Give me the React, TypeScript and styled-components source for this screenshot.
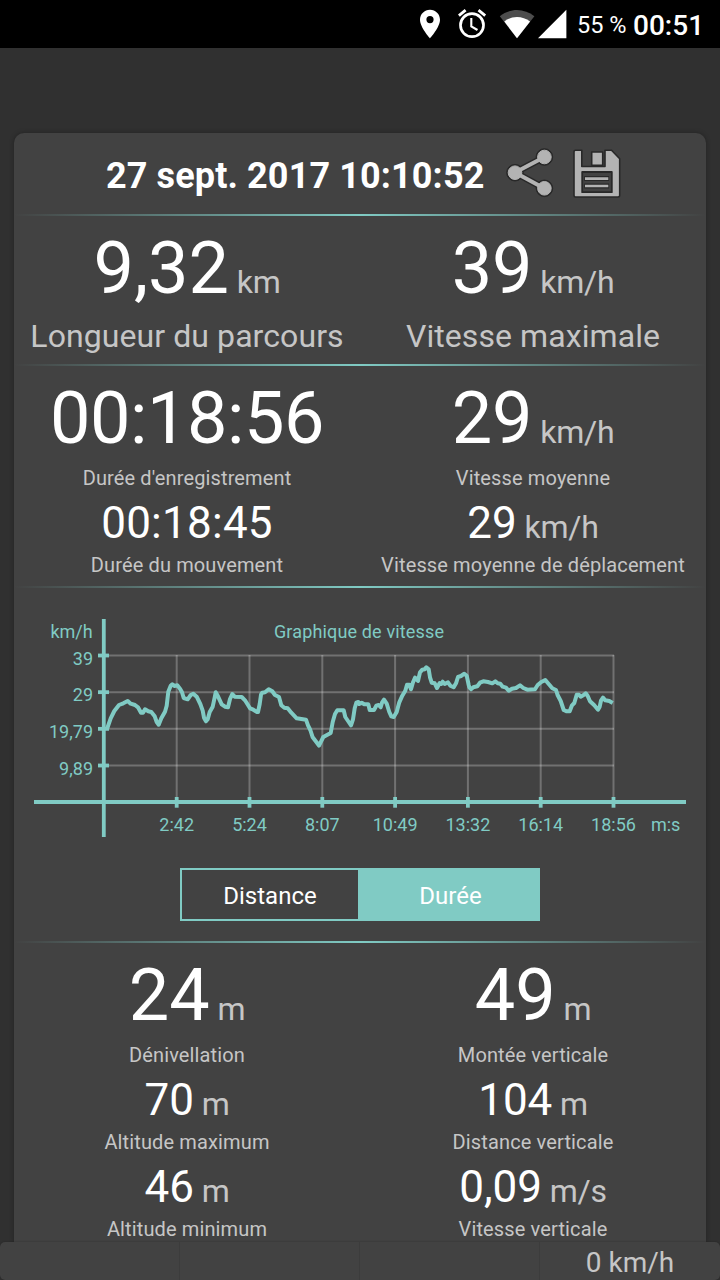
import React from 'react';
import styled, { createGlobalStyle } from 'styled-components';

const ACCENT = '#80cbc4';
const PANEL = '#424242';
const MUTED = '#c6c6c6';

const GlobalStyle = createGlobalStyle`
  * { box-sizing: border-box; }
  body { margin: 0; background: #303030; font-family: Roboto, sans-serif; color: #fff; }
`;

const Screen = styled.div`
  display: flex;
  flex-direction: column;
  width: 720px;
  height: 1280px;
  overflow: hidden;
  background: #303030;
`;

const StatusBar = styled.header`
  display: flex;
  flex: none;
  align-items: flex-start;
  height: 48px;
  padding-left: 418px;
  background: #000;
  svg { display: block; flex: none; }
`;

const Battery = styled.span`
  width: 56px;
  padding-left: 9px;
  font-size: 23.5px;
  line-height: 50px;
  white-space: nowrap;
`;

const Clock = styled.span`
  padding-left: 9px;
  font-size: 28px;
  font-weight: 500;
  line-height: 51px;
  white-space: nowrap;
`;

const Card = styled.main`
  flex: none;
  width: 692px;
  height: 1109px;
  margin: 85px 14px 0;
  border-radius: 10px 10px 0 0;
  background: ${PANEL};
  box-shadow: 0 0 5px rgba(0, 0, 0, 0.3);
`;

const CardHeader = styled.div`
  display: flex;
  height: 81px;
  padding-left: 92px;
`;

const Title = styled.h1`
  width: 400px;
  margin: 0;
  font-size: 36px;
  font-weight: 700;
  letter-spacing: 0.12px;
  line-height: 87px;
  white-space: nowrap;
`;

const IconButton = styled.button`
  width: 66px;
  height: 81px;
  padding: 0;
  border: 0;
  background: none;
  svg { display: block; }
`;

const Divider = styled.div`
  height: 2px;
  background: linear-gradient(90deg, transparent, ${ACCENT} 50%, transparent);
`;

const Section = styled.section<{ $height: number }>`
  display: grid;
  grid-template-columns: 1fr 1fr;
  height: ${(p) => p.$height}px;
`;

const Column = styled.div`
  display: flex;
  flex-direction: column;
  align-items: center;
  padding-top: 11px;
`;

type Size = 'large' | 'medium';

const Value = styled.div<{ $size: Size; $tracking: number }>`
  font-size: ${(p) => (p.$size === 'large' ? 72 : 44)}px;
  line-height: ${(p) => (p.$size === 'large' ? 84 : 52)}px;
  margin-top: ${(p) => (p.$size === 'large' ? 0 : 7)}px;
  letter-spacing: ${(p) => p.$tracking}px;
  white-space: nowrap;
`;

const Unit = styled.span`
  font-size: 32px;
  line-height: 1;
  letter-spacing: -0.25px;
  color: ${MUTED};
  white-space: pre;
`;

const Label = styled.div<{ $large?: boolean; $top: number }>`
  margin-top: ${(p) => p.$top}px;
  font-size: ${(p) => (p.$large ? 32 : 20)}px;
  line-height: ${(p) => (p.$large ? 38 : 24)}px;
  letter-spacing: ${(p) => (p.$large ? 0.08 : 0.13)}px;
  color: ${MUTED};
  white-space: nowrap;
`;

const ChartSection = styled.section`
  display: flex;
  flex-direction: column;
  align-items: center;
  height: 353px;
  svg { display: block; flex: none; }
`;

const Toggle = styled.div`
  display: flex;
  width: 360px;
  height: 53px;
  border: 2px solid ${ACCENT};
`;

const ToggleOption = styled.button<{ $active?: boolean }>`
  flex: ${(p) => (p.$active ? '0 0 180px' : '0 0 176px')};
  padding: 2px 0 0 ${(p) => (p.$active ? 5 : 0)}px;
  border: 0;
  background: ${(p) => (p.$active ? ACCENT : 'transparent')};
  color: #fff;
  font: 400 24px Roboto, sans-serif;
`;

const BottomBar = styled.footer`
  position: relative;
  display: grid;
  flex: none;
  grid-template-columns: repeat(4, 1fr);
  height: 38px;
  border-radius: 5px;
  background: ${PANEL};
  box-shadow: 0 0 2px rgba(0, 0, 0, 0.3);
`;

const BottomCell = styled.div`
  font-size: 28px;
  line-height: 42px;
  text-align: center;
  color: ${MUTED};
  &:not(:last-child) { border-right: 1px solid #3c3c3c; }
`;

interface MetricProps {
  value: string;
  unit?: string;
  label: string;
  size?: Size;
  bigLabel?: boolean;
  tracking?: number;
}

function Metric({ value, unit, label, size = 'medium', bigLabel, tracking = 0 }: MetricProps) {
  return (
    <>
      <Value $size={size} $tracking={tracking}>
        {value}
        {unit && <Unit>{' ' + unit}</Unit>}
      </Value>
      <Label $large={bigLabel} $top={bigLabel ? 6 : size === 'large' ? 5 : 4}>{label}</Label>
    </>
  );
}

const speed =
  '107,729 110.7,718.3 114.3,711 119,705 123.3,703.3 127.7,701 130.7,703.7 135,705 138,707.3 141,712.7 143,712.7 145,709.3 148.3,711.3 151.3,712 154.7,716.3 156.7,722 158.7,724.7 161.3,718.3 165,711.7 166.7,705.7 168.3,691.7 170.7,685.7 172.3,684.3 174.3,686 177.3,685.3 180,688.7 182,692.3 183.7,698 187.7,699.3 190.7,695 193.3,693.7 196.7,696.7 200.3,704 202.7,710.7 204,717.7 206,721.3 207.7,719.3 209.7,712 212.7,706.7 214.7,697.3 215.7,692.3 218,696.3 221.7,704.3 225,706.7 228,707.3 230,699 232.3,694 234.7,696.7 241.7,697 245,700.3 250,708.3 253.3,709.7 257,712 258,712 259.7,704 261,694.7 262.3,692.7 265,692.3 268.7,689.3 272.3,691.3 275,695 279,697 281.3,705.3 284.3,707.7 287.7,708.3 291.3,712.7 296.7,718.3 306,719.7 308,725.3 310.3,730 312.7,737.3 317.3,743.3 319,745.7 321,741.7 323.3,737 330.7,733 332.7,722 335,714 337.3,710.3 343.7,710.3 345.3,717 348.7,722 351,725.3 353,719.3 354.7,708.3 356.3,702.7 358.3,702 359.3,704 361.7,702.7 364.3,704.3 368.3,704.3 369.7,710 374,710 376.3,705.7 378.7,705 380.7,707.3 382,702.7 384,699.7 386.7,703.7 389.3,712 391.3,716.3 393.7,717 396.7,712 399.3,702.3 402.3,695.7 405.3,690.7 407,684.7 409.3,684.7 411,689.3 413,682.3 415,677.7 418,681 420,672.3 422.3,669.7 424.7,669.3 426.3,667.3 428.7,669.3 430,677.3 431.7,682.7 434.7,683.3 437,688 439.7,683 441.3,684 442.7,681.7 444.7,684 448,682.3 450.3,685.7 453.7,687.3 456,683.3 458,677 461,676 464.3,673.7 466.7,675.7 468.7,685 469.3,687.3 471,689.3 473.3,687.3 477.3,686.3 480,682.7 483.3,681.3 488,682 492.3,683.3 495.3,681.3 497.7,683.3 500.3,683.7 502.7,686.7 506,687.7 508.7,690.7 512,688.7 516,688 520,685.3 523.3,688 527.3,689.7 535,689.3 537.7,685 541.3,682 545.3,680 548.7,684 552.3,688.3 556,690 557.7,695.3 560.7,701 563.7,710 566.7,711.3 569.7,711.3 572,705.3 574.3,703 576.7,694.7 579,694.7 580.7,696.7 583.3,695.3 585.7,693.3 587.7,696 590,701.3 594.3,705.3 598,709.7 599.7,706.7 601,700.7 603,697.7 605.3,700.3 609.3,701 612.7,703';

const yTicks = ['39', '29', '19,79', '9,89'].map((label, i) => ({ label, y: 655.5 + i * 36.67 }));
const xTicks = ['2:42', '5:24', '8:07', '10:49', '13:32', '16:14', '18:56'].map((label, i) => ({
  label,
  x: 176.7 + i * 72.8,
}));

function SpeedChart() {
  return (
    <svg width="692" height="280" viewBox="14 588 692 280" fontFamily="Roboto, sans-serif" fontSize="18">
      <g stroke="#fff" strokeOpacity="0.25" strokeWidth="2">
        {yTicks.map((t) => <path key={t.label} d={`M104 ${t.y}H614`} />)}
        {xTicks.map((t) => <path key={t.label} d={`M${t.x} 655V802`} />)}
      </g>
      <g stroke={ACCENT} strokeWidth="3.8">
        <path d="M103.8 619V837M34 802H686" />
        {yTicks.map((t) => <path key={t.label} d={`M98 ${t.y}H109`} />)}
        {xTicks.map((t) => <path key={t.label} d={`M${t.x} 797V807.7`} />)}
      </g>
      <polyline points={speed} fill="none" stroke={ACCENT} strokeWidth="4" strokeLinejoin="round" />
      <g fill={ACCENT}>
        <text x="92.7" y="638" textAnchor="end">km/h</text>
        <text x="359" y="638" textAnchor="middle" letterSpacing="0.15">Graphique de vitesse</text>
        {yTicks.map((t) => <text key={t.label} x="93" y={t.y + 9.2} textAnchor="end">{t.label}</text>)}
        {xTicks.map((t) => <text key={t.label} x={t.x} y="831" textAnchor="middle">{t.label}</text>)}
        <text x="665.7" y="831" textAnchor="middle">m:s</text>
      </g>
    </svg>
  );
}

function StatusIcons() {
  return (
    <svg width="150" height="48" viewBox="418 0 150 48">
      <path fill="#fff" fillRule="evenodd" d="M430 9.7c-5.6 0-10 4.4-10 10C420 27.200 430 38.300 430 38.300s10-11.100 10-18.600c0-5.600-4.400-10-10-10zm0 13.500a3.600 3.600 0 1 1 0-7.200 3.600 3.600 0 0 1 0 7.200z" />
      <g fill="none" stroke="#fff">
        <circle cx="472" cy="25.200" r="11.500" strokeWidth="2.700" />
        <path d="M471.300 18v8.300l6.200 3.700" strokeWidth="2.100" />
        <path d="M458.900 15.700l6.700-5.500M485.200 15.700l-6.700-5.500" strokeWidth="2.800" />
      </g>
      <path fill="#4d4d4d" d="M517 38.300L499.800 16.200C504.700 12.300 510.700 10 517 10s12.300 2.300 17.400 6.200z" />
      <path fill="#fff" d="M517 38.300L504.300 21.500C508 18.700 512.300 17.100 517 17.100s9.200 1.600 13.100 4.400z" />
      <path fill="#fff" d="M538 38.300h28.400V9.700z" />
    </svg>
  );
}

function ShareIcon() {
  return (
    <svg width="66" height="81" viewBox="506 133 66 81">
      <g stroke="#282828" fill="#282828">
        <path d="M544.500 157L515 172.500 544.500 188.500" fill="none" strokeWidth="6.800" />
        <circle cx="544.400" cy="157" r="8.300" />
        <circle cx="515" cy="172.700" r="8.300" />
        <circle cx="544.400" cy="188.300" r="8.300" />
      </g>
      <g fill="#b3b3b3" stroke="#b3b3b3">
        <path d="M544.500 157L515 172.500 544.500 188.500" fill="none" strokeWidth="4" />
        <circle cx="544.400" cy="157" r="6.800" />
        <circle cx="515" cy="172.700" r="6.800" />
        <circle cx="544.400" cy="188.300" r="6.800" />
      </g>
    </svg>
  );
}

function SaveIcon() {
  return (
    <svg width="66" height="81" viewBox="572 133 66 81">
      <g fill="#b3b3b3" stroke="#282828" strokeWidth="1.600" strokeLinejoin="round">
        <path d="M575.500 150.300h6.300v16.200h23.200v-16.200h6.500l8.200 8.500v36.500q0 1.700-1.700 1.700h-42.500q-1.500 0-1.500-1.700v-43.500q0-1.500 1.500-1.500z" />
        <rect x="591.700" y="152" width="11" height="13.300" />
        <path fill="#424242" strokeWidth="1.800" d="M582.200 172h29.600v20.200h-29.600z" />
      </g>
      <path stroke="#282828" strokeWidth="5" d="M584.200 178.600h24.900M584.200 186h24.900" />
      <path stroke="#b3b3b3" strokeWidth="2.600" d="M585 178.600h23.300M585 186h23.300" />
    </svg>
  );
}

export default function App() {
  return (
    <Screen>
      <GlobalStyle />
      <StatusBar>
        <StatusIcons />
        <Battery>55 %</Battery>
        <Clock>00:51</Clock>
      </StatusBar>
      <Card>
        <CardHeader>
          <Title>27 sept. 2017 10:10:52</Title>
          <IconButton aria-label="Partager"><ShareIcon /></IconButton>
          <IconButton aria-label="Enregistrer"><SaveIcon /></IconButton>
        </CardHeader>
        <Divider />
        <Section $height={148}>
          <Column>
            <Metric size="large" value="9,32" unit="km" label="Longueur du parcours" bigLabel />
          </Column>
          <Column>
            <Metric size="large" value="39" unit="km/h" label="Vitesse maximale" bigLabel />
          </Column>
        </Section>
        <Divider />
        <Section $height={220}>
          <Column>
            <Metric size="large" value="00:18:56" label="Durée d'enregistrement" tracking={-0.45} />
            <Metric value="00:18:45" label="Durée du mouvement" tracking={0.25} />
          </Column>
          <Column>
            <Metric size="large" value="29" unit="km/h" label="Vitesse moyenne" />
            <Metric value="29" unit="km/h" label="Vitesse moyenne de déplacement" />
          </Column>
        </Section>
        <Divider />
        <ChartSection>
          <SpeedChart />
          <Toggle>
            <ToggleOption>Distance</ToggleOption>
            <ToggleOption $active>Durée</ToggleOption>
          </Toggle>
        </ChartSection>
        <Divider />
        <Section $height={299}>
          <Column>
            <Metric size="large" value="24" unit="m" label="Dénivellation" />
            <Metric value="70" unit="m" label="Altitude maximum" />
            <Metric value="46" unit="m" label="Altitude minimum" />
          </Column>
          <Column>
            <Metric size="large" value="49" unit="m" label="Montée verticale" />
            <Metric value="104" unit="m" label="Distance verticale" />
            <Metric value="0,09" unit="m/s" label="Vitesse verticale" />
          </Column>
        </Section>
      </Card>
      <BottomBar>
        <BottomCell />
        <BottomCell />
        <BottomCell />
        <BottomCell>0 km/h</BottomCell>
      </BottomBar>
    </Screen>
  );
}
